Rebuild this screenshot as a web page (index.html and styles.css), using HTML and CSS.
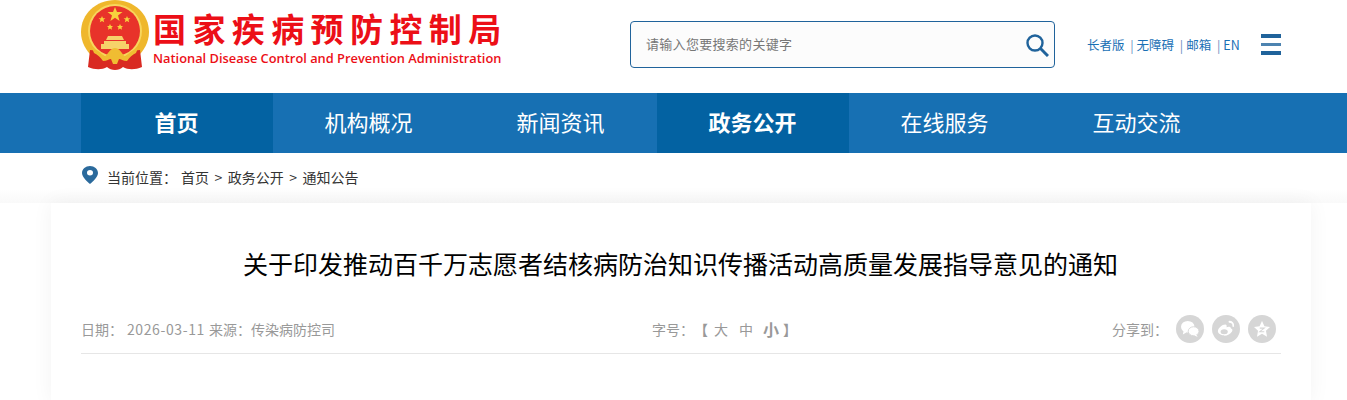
FILE: index.html
```html
<!DOCTYPE html>
<html lang="zh-CN">
<head>
  <meta charset="UTF-8">
  <title>关于印发推动百千万志愿者结核病防治知识传播活动高质量发展指导意见的通知</title>
  <link rel="stylesheet" href="styles.css">
</head>
<body>

  <!-- 头部 -->
  <div class="header">
    <div class="logo">
      <svg class="emblem" width="70" height="71" viewBox="0 0 70 71">
        <path d="M34 0C15 0 0 14 0 32c0 10 5 19 12 25h44c7-6 12-15 12-25C68 14 53 0 34 0z" fill="#efb72c"/>
        <circle cx="34" cy="31" r="27" fill="#f8d65c"/>
        <circle cx="34" cy="31" r="25" fill="#e8332a"/>
        <polygon points="34,7 36,12 41.500,12 37,15.500 38.600,21 34,17.700 29.400,21 31,15.500 26.500,12 32,12" fill="#f7d13d"/>
        <polygon points="21,16 22,18.300 24.400,18.300 22.500,19.800 23.200,22.300 21,20.900 18.800,22.300 19.500,19.800 17.600,18.300 20,18.300" fill="#f7d13d"/>
        <polygon points="46,16 47,18.300 49.400,18.300 47.500,19.800 48.200,22.300 46,20.900 43.800,22.300 44.500,19.800 42.600,18.300 45,18.300" fill="#f7d13d"/>
        <polygon points="29,24 30,26 32,26 30.500,27.500 31,29.700 29,28.500 27,29.700 27.500,27.500 26,26 28,26" fill="#f7d13d"/>
        <polygon points="39,24 40,26 42,26 40.500,27.500 41,29.700 39,28.500 37,29.700 37.500,27.500 36,26 38,26" fill="#f7d13d"/>
        <path d="M27 36h14l2 4h-18zM23 41h22v3h3v5H20v-5h3z" fill="#f6d26a"/>
        <path d="M9 50c6 0 10 3 14 8 4-1 7-4 11-4s7 3 11 4c4-5 8-8 14-8l2 17c-7 3-14 3-19 0-2 2-5 3-8 3s-6-1-8-3c-5 3-12 3-19 0z" fill="#d92a22"/>
        <path d="M11 48c6 2 9 5 13 9 3-4 6-9 10-9s7 5 10 9c4-4 7-7 13-9l-2 5c-4 2-6 4-9 8-4 0-6-2-8-2l-2 5h-4l-2-5c-2 0-4 2-8 2-3-4-5-6-9-8z" fill="#f0bd32"/>
      </svg>
      <div class="logo-text">
        <div class="logo-cn">国家疾病预防控制局</div>
        <div class="logo-en">National Disease Control and Prevention Administration</div>
      </div>
    </div>
    <div class="search">
      <span class="search-hint">请输入您要搜索的关键字</span>
      <svg width="24" height="24" viewBox="0 0 24 24" fill="none" stroke="#20639b">
        <circle cx="10" cy="10" r="7.500" stroke-width="2.400"/>
        <path d="M15.500 15.500L23 23" stroke-width="3"/>
      </svg>
    </div>
    <div class="links">
      <a>长者版</a><i>|</i><a>无障碍</a><i>|</i><a>邮箱</a><i>|</i><a>EN</a>
    </div>
    <div class="menu-btn"><span></span><span class="thin"></span><span></span></div>
  </div>

  <!-- 导航 -->
  <div class="nav">
    <div class="nav-inner">
      <a class="nav-item on">首页</a>
      <a class="nav-item">机构概况</a>
      <a class="nav-item">新闻资讯</a>
      <a class="nav-item on">政务公开</a>
      <a class="nav-item">在线服务</a>
      <a class="nav-item">互动交流</a>
    </div>
  </div>

  <!-- 当前位置 -->
  <div class="crumbs">
    <svg width="16" height="18" viewBox="0 0 16 20" preserveAspectRatio="none">
      <path d="M8 0C3.600 0 0 3.500 0 7.800 0 12.500 5 17 8 20c3-3 8-7.500 8-12.200C16 3.500 12.400 0 8 0zm0 10.500a3 3 0 1 1 0-6 3 3 0 0 1 0 6z" fill="#2b6a9c"/>
    </svg>
    <span class="crumb-label">当前位置：</span>
    <span>首页</span><span>&gt;</span><span>政务公开</span><span>&gt;</span><span>通知公告</span>
  </div>

  <!-- 正文 -->
  <div class="card">
    <h1 class="title">关于印发推动百千万志愿者结核病防治知识传播活动高质量发展指导意见的通知</h1>
    <div class="meta">
      <div class="meta-left">日期：<span class="date">2026-03-11</span>来源：传染病防控司</div>
      <div class="meta-size">
        <span>字号：</span>
        <b class="bracket">【</b>
        <span class="size-l">大</span>
        <span class="size-m">中</span>
        <b class="size-s">小</b>
        <b class="bracket">】</b>
      </div>
      <div class="meta-share">
        <span class="share-label">分享到：</span>
        <span class="share-btn">
          <svg width="22" height="20" viewBox="0 0 22 20" fill="#fff">
            <ellipse cx="8.500" cy="7.500" rx="7.500" ry="6.500"/>
            <path d="M4 12l-1 4 4-2z"/>
            <ellipse cx="15" cy="12.500" rx="6" ry="5" stroke="#d6d6d6"/>
            <path d="M18 16l1.500 3-4-2z"/>
          </svg>
        </span>
        <span class="share-btn">
          <svg width="22" height="20" viewBox="0 0 22 20" fill="none" stroke="#fff" stroke-width="2">
            <path d="M9 17c-4 0-7-2-7-4.500C2 9 7 5 10 5c2 0 2 2 1.500 3 2-1 5-1 5 1.500 2 .500 2 2 1 3.500-1.500 2.500-5 4.500-8.500 4.500z" fill="#fff" stroke="none"/>
            <ellipse cx="9" cy="13" rx="4" ry="2.800" fill="#d6d6d6" stroke="none"/>
            <path d="M14 2c3-.5 6 2 5 5.500"/>
          </svg>
        </span>
        <span class="share-btn">
          <svg width="18" height="18" viewBox="0 0 18 18">
            <polygon points="9,0 11.700,6 18,6.800 13.400,11 14.600,17.500 9,14.300 3.400,17.500 4.600,11 0,6.800 6.300,6" fill="#fff"/>
            <path d="M6.500 8h5l-5 4h5" fill="none" stroke="#d6d6d6" stroke-width="1.200"/>
          </svg>
        </span>
      </div>
    </div>
  </div>

</body>
</html>
```

FILE: styles.css
```css
* { box-sizing: border-box; }
html, body {
  margin: 0;
  padding: 0;
  height: 400px;
  overflow: hidden;
  background: #fff;
  font-family: "Noto Sans CJK SC", "Liberation Sans", sans-serif;
}

.header {
  display: flex;
  align-items: flex-start;
  height: 93px;
  padding-left: 81px;
}

.logo {
  display: flex;
  width: 549px;
}

.emblem {
  flex: none;
}

.logo-text {
  margin-left: 2px;
  color: #ec0f17;
  white-space: nowrap;
}

.logo-cn {
  margin-top: 8px;
  height: 40px;
  font-size: 33px;
  line-height: 40px;
  font-weight: bold;
  letter-spacing: 6.400px;
}

.logo-en {
  margin-top: 1px;
  font-family: "Open Sans", sans-serif;
  font-size: 12.850px;
  line-height: 18px;
  font-weight: 600;
}

.search {
  display: flex;
  align-items: center;
  justify-content: space-between;
  width: 425px;
  height: 47px;
  margin-top: 21px;
  padding: 0 5px 0 15px;
  background: #fcfcfc;
  border: 1px solid #20639b;
  border-radius: 4px;
}

.search-hint {
  padding-bottom: 2px;
  font-size: 13px;
  letter-spacing: .3px;
  color: #777;
}

.links {
  display: flex;
  align-items: center;
  height: 20px;
  margin: 34px 0 0 32px;
  font-size: 12.500px;
  color: #1a70b5;
  white-space: nowrap;
}

.links i {
  margin: 0 3px 0 5.700px;
  font-style: normal;
  color: #6a8fc0;
}

.menu-btn {
  display: flex;
  flex-direction: column;
  justify-content: space-between;
  width: 20px;
  height: 21px;
  margin: 34px 0 0 21px;
}

.menu-btn span {
  height: 4px;
  background: #20639b;
}

.menu-btn .thin {
  height: 3px;
  background: #4d83b0;
}

.nav {
  height: 60px;
  background: #1770b3;
}

.nav-inner {
  display: flex;
  padding-left: 81px;
}

.nav-item {
  width: 192px;
  height: 60px;
  padding-right: 1px;
  font-size: 22px;
  line-height: 56px;
  text-align: center;
  color: #fff;
}

.nav-item.on {
  background: #0362a2;
  font-weight: bold;
}

.crumbs {
  display: flex;
  align-items: flex-start;
  gap: 5.500px;
  height: 50px;
  padding: 12px 0 0 82px;
  font-size: 14px;
  line-height: 24px;
  color: #333;
  background: linear-gradient(#fff, #fff 36px, #f9f9f9);
}

.crumbs svg {
  margin: 1px 3.500px 0 0;
}

.crumb-label {
  margin-right: -1.500px;
}

.card {
  width: 1260px;
  height: 200px;
  margin: 0 0 0 51px;
  padding: 0 30px;
  background: #fff;
  box-shadow: 0 0 20px rgba(0, 0, 0, 0.05);
}

.title {
  margin: 0;
  padding: 39px 1px 0 0;
  height: 98px;
  font-size: 25px;
  line-height: 42px;
  font-weight: normal;
  text-align: center;
  color: #000;
  white-space: nowrap;
}

.meta {
  display: flex;
  align-items: center;
  height: 53px;
  padding-top: 3px;
  border-bottom: 1px solid #e6e6e6;
  font-size: 14px;
  color: #999;
}

.meta-left {
  width: 571px;
  white-space: nowrap;
}

.date {
  margin: 0 4px;
  letter-spacing: .6px;
}

.meta-size {
  display: flex;
  align-items: center;
  flex: 1;
}

.bracket {
  width: 14px;
}

.size-l {
  margin-left: 6px;
}

.size-m {
  margin-left: 11px;
}

.size-s {
  margin: 0 4px 0 10px;
  font-size: 16px;
}

.meta-share {
  display: flex;
  align-items: center;
  gap: 8px;
  padding: 1px 5px 0 0;
}

.share-btn {
  display: flex;
  align-items: center;
  justify-content: center;
  width: 28px;
  height: 28px;
  border-radius: 50%;
  background: #d6d6d6;
}

.share-btn svg {
  transform: scale(0.9);
}
```
